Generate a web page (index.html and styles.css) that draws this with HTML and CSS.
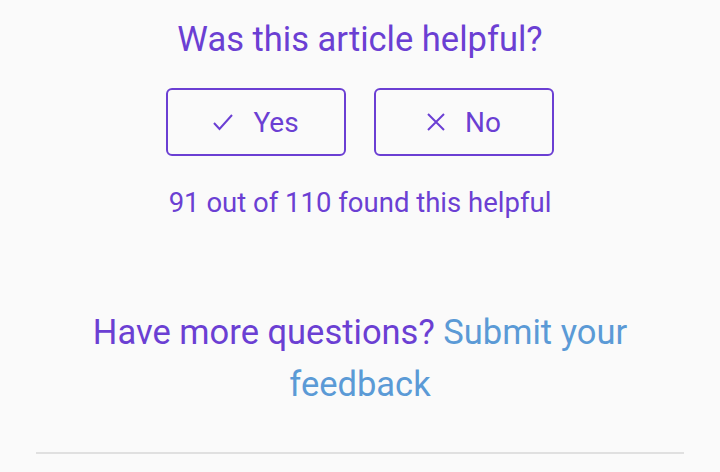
FILE: index.html
```html
<!DOCTYPE html>
<html>
<head>
<meta charset="utf-8">
<link rel="stylesheet" href="styles.css">
</head>
<body>
<div class="page">
  <section class="feedback">
    <h2 class="title">Was this article helpful?</h2>
    <div class="actions">
      <button class="btn">
        <svg class="icon" width="20" height="18" viewBox="0 0 20 18"><path d="M1 10 L6.5 16 L19 2" fill="none" stroke="currentColor" stroke-width="2"/></svg>
        <span>Yes</span>
      </button>
      <button class="btn">
        <svg class="icon" width="18" height="18" viewBox="0 0 18 18"><path d="M1 1 L17 17 M17 1 L1 17" fill="none" stroke="currentColor" stroke-width="2"/></svg>
        <span>No</span>
      </button>
    </div>
    <p class="count">91 out of 110 found this helpful</p>
  </section>
  <p class="more">Have more questions? <a class="link" href="#">Submit your feedback</a></p>
  <hr class="divider">
</div>
</body>
</html>
```
FILE: styles.css
```css
html, body {
  margin: 0;
  padding: 0;
  background: #fafafa;
}
body {
  font-family: Roboto, "Noto Sans", sans-serif;
  color: #6b3fd3;
}
.page {
  padding: 0 36px;
}
.feedback {
  display: flex;
  flex-direction: column;
  align-items: center;
}
.title {
  margin: 18px 0 0;
  font-size: 34.5px;
  font-weight: 400;
  line-height: 42px;
}
.actions {
  display: flex;
  gap: 28px;
  margin-top: 28px;
}
.btn {
  width: 180px;
  height: 68px;
  border: 2px solid #6b3fd3;
  border-radius: 6px;
  background: transparent;
  color: #6b3fd3;
  font-family: inherit;
  font-size: 28px;
  display: flex;
  align-items: center;
  justify-content: center;
  gap: 20px;
  padding: 0;
}
.icon {
  display: block;
}
.count {
  margin: 30px 0 0;
  font-size: 27.5px;
  line-height: 34px;
}
.more {
  margin: 86px 0 0;
  text-align: center;
  font-size: 34.5px;
  line-height: 52px;
}
.link {
  color: #5b9ad6;
  text-decoration: none;
}
.divider {
  margin: 42px 0 0;
  border: 0;
  height: 2px;
  background: #e0e0e0;
}
```
